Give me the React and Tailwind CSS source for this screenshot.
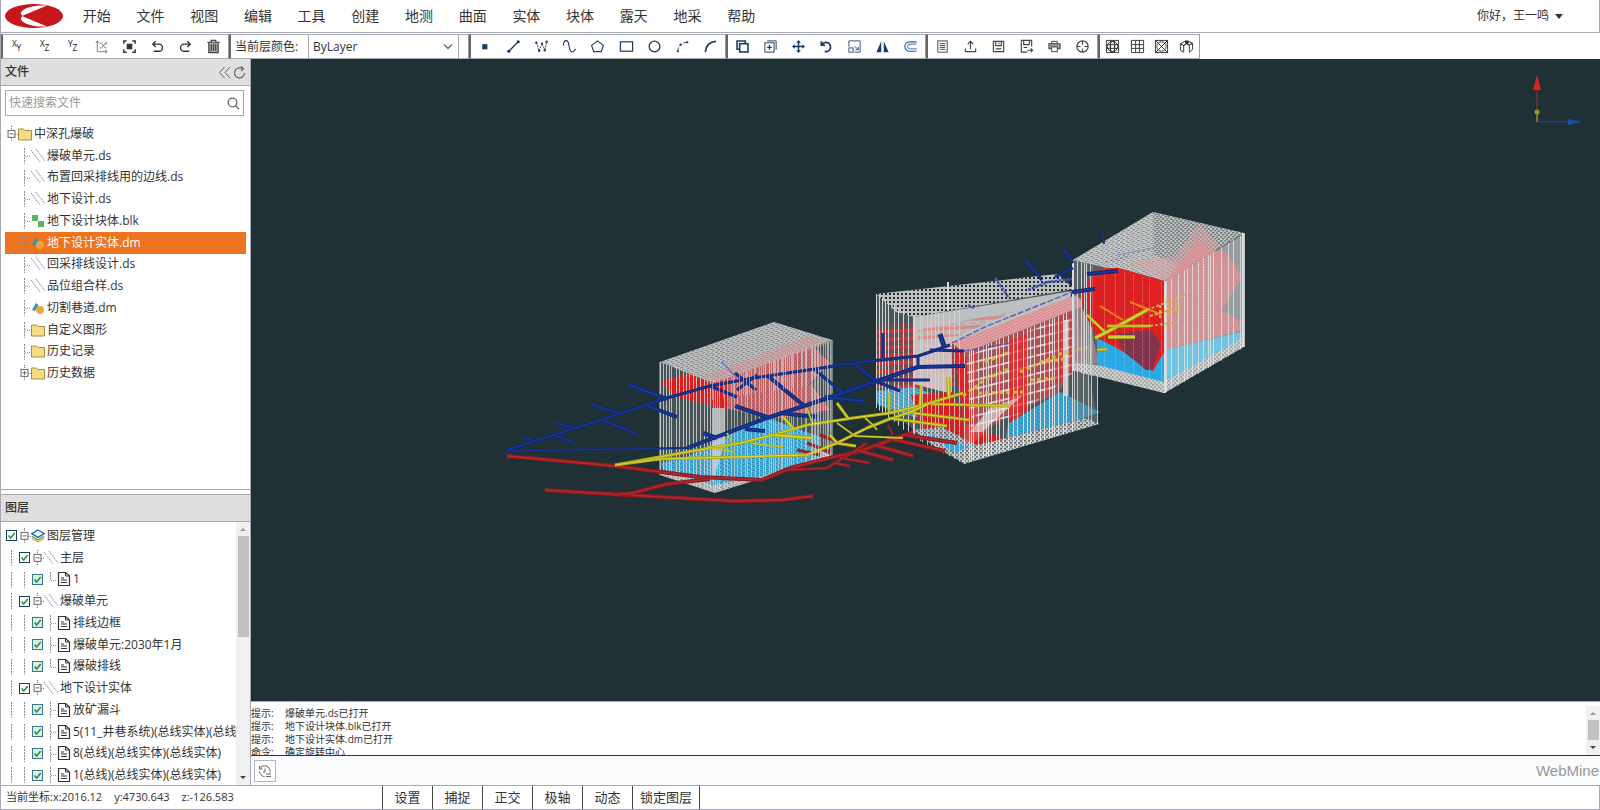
import React, { useState } from "react";

const FONT = "font-['Open_Sans','Noto_Sans_CJK_SC',sans-serif]";

const menus = ["开始", "文件", "视图", "编辑", "工具", "创建", "地测", "曲面", "实体", "块体", "露天", "地采", "帮助"];

const files = [
  { name: "爆破单元.ds", icon: "lines" },
  { name: "布置回采排线用的边线.ds", icon: "lines" },
  { name: "地下设计.ds", icon: "lines" },
  { name: "地下设计块体.blk", icon: "block" },
  { name: "地下设计实体.dm", icon: "solid" },
  { name: "回采排线设计.ds", icon: "lines" },
  { name: "品位组合样.ds", icon: "lines" },
  { name: "切割巷道.dm", icon: "solid" },
  { name: "自定义图形", icon: "folder" },
  { name: "历史记录", icon: "folder" },
  { name: "历史数据", icon: "folder", expander: "+" },
];

const layers = [
  { name: "图层管理", level: 0, icon: "layers" },
  { name: "主层", level: 1, icon: "lines" },
  { name: "1", level: 2, icon: "doc", last: true },
  { name: "爆破单元", level: 1, icon: "lines" },
  { name: "排线边框", level: 2, icon: "doc" },
  { name: "爆破单元:2030年1月", level: 2, icon: "doc" },
  { name: "爆破排线", level: 2, icon: "doc", last: true },
  { name: "地下设计实体", level: 1, icon: "lines" },
  { name: "放矿漏斗", level: 2, icon: "doc" },
  { name: "5(11_井巷系统)(总线实体)(总线实体)", level: 2, icon: "doc" },
  { name: "8(总线)(总线实体)(总线实体)", level: 2, icon: "doc" },
  { name: "1(总线)(总线实体)(总线实体)", level: 2, icon: "doc" },
];

const logs = [
  ["提示:", "爆破单元.ds已打开"],
  ["提示:", "地下设计块体.blk已打开"],
  ["提示:", "地下设计实体.dm已打开"],
  ["命令:", "确定旋转中心"],
];

const statusButtons = ["设置", "捕捉", "正交", "极轴", "动态"];

/* ---------- toolbar icons, all on a 16 grid ---------- */

const axis = (a, b) => (
  <g fill="#222" stroke="none" fontSize="9" fontWeight="500" fontFamily="Open Sans">
    <text x="2" y="8">{a}</text>
    <text x="7" y="13">{b}</text>
  </g>
);

const viewTools = [
  ["XY视图", axis("X", "Y")],
  ["XZ视图", axis("X", "Z")],
  ["YZ视图", axis("Y", "Z")],
  ["坐标", <g stroke="#777"><path d="M3.500 2v11.500H14M2 4l1.500-2L5 4M12 12l2 1.500-2 1.500" /><path d="M6 4.500h2l4 5h1.500M6 9.500h2l4-5h1.500M12 3l1.500 1.500L12 6" /></g>],
  ["全图", <g stroke="#333" strokeWidth="1.600"><path d="M2 5V2h3M11 2h3v3M14 11v3h-3M5 14H2v-3" /><rect x="5" y="5" width="6" height="6" fill="#333" stroke="none" /></g>],
  ["撤销", <path d="M6 2.500L3 5.500l3 3M3 5.500h6.500a3.800 3.800 0 010 7.600H4" stroke="#333" strokeWidth="1.500" />],
  ["重做", <path d="M10 2.500l3 3-3 3M13 5.500H6.500a3.800 3.800 0 000 7.600H12" stroke="#333" strokeWidth="1.500" />],
  ["删除", <g stroke="#444" strokeWidth="1.300"><path d="M1.500 3.500h13M5.500 3V1.500h5V3" /><path d="M3 4v10.500h10V4" fill="#aaa" /><path d="M5.700 5.500v7M8 5.500v7M10.300 5.500v7" /></g>],
];

const drawTools = [
  ["点", <rect x="4.500" y="5.500" width="5.500" height="5.500" fill="#1a3b63" stroke="none" />],
  ["直线", <g><path d="M3 13L13 3" strokeWidth="1.400" /><circle cx="3" cy="13" r="1.700" fill="#1a3b63" stroke="none" /><circle cx="13" cy="3" r="1.700" fill="#1a3b63" stroke="none" /></g>],
  ["多段线", <g><path d="M2.500 4l3 8.500L8.500 5l3 6.500L13.500 3" strokeDasharray="2 1" /><g fill="#1a3b63" stroke="none"><circle cx="2.500" cy="4" r="1.300" /><circle cx="5.500" cy="12.500" r="1.300" /><circle cx="8.500" cy="5" r="1.200" /><circle cx="11.500" cy="12" r="1.300" /><circle cx="13.500" cy="3" r="1.300" /></g></g>],
  ["曲线", <path d="M1.500 7c.5-7 5-7 6 0s3.500 9.500 7 3.500" strokeWidth="1.200" />],
  ["多边形", <path d="M8 2l6.300 4.800L12 13.500H4L1.700 6.800z" strokeWidth="1.200" />],
  ["矩形", <rect x="1.500" y="3" width="13" height="10" strokeWidth="1.300" />],
  ["圆", <circle cx="8" cy="8" r="5.700" strokeWidth="1.400" />],
  ["三点弧", <g strokeWidth=".9"><path d="M3 13C3.500 7 7 3.500 13.500 3.500" strokeDasharray="4 1.500" /><circle cx="3" cy="13" r=".8" fill="#1a3b63" /><circle cx="6" cy="6" r=".8" fill="#1a3b63" /><circle cx="13" cy="3.500" r=".8" fill="#1a3b63" /></g>],
  ["弧", <path d="M2.500 14C3 7.500 7 3 14 2.500" strokeWidth="1.800" />],
];

const editTools = [
  ["复制", <g strokeWidth="1.700"><path d="M4.500 11H2.200V2.200H11v2" /><rect x="5" y="5" width="8.800" height="8.800" /></g>],
  ["增量复制", <g><path d="M4.500 2H14v9.500" /><rect x="2" y="4" width="9.800" height="10" /><path d="M6.900 6.500v5M4.400 9h5" strokeWidth="1.300" /></g>],
  ["移动", <g><path d="M8 3v10M3 8h10" strokeWidth="1.600" /><path d="M8 1l2.500 3h-5zM8 15l2.500-3h-5zM1 8l3-2.500v5zM15 8l-3-2.500v5z" fill="#1a3b63" stroke="none" /></g>],
  ["旋转", <path d="M2.500 2.500v4h4M3 6.200A5 5 0 118.500 13.500H6" strokeWidth="1.900" />],
  ["缩放", <g strokeWidth=".9"><path d="M2 8V2h12v12H8" /><rect x="2" y="9.500" width="4.500" height="4.500" /><path d="M8 7.500l4 4M12 8.500v3H9" /></g>],
  ["镜像", <path d="M6.700 2v12H1.500zM9.300 2v12h5.200z" fill="#1a3b63" stroke="none" />],
  ["偏移", <g stroke="#2f5f9e" strokeWidth="1.200"><path d="M14.500 3H7a5 5 0 000 10h7.500" /><path d="M14.500 5.500H7.500a2.500 2.500 0 000 5h7" stroke="#6c8fbd" /></g>],
];

const fileTools = [
  ["文档", <g><rect x="3" y="2" width="10" height="12" /><path d="M5 5h6M5 7h6M5 9h6M5 11h6" /></g>],
  ["导出", <path d="M8 11V3M5 5.500L8 2.500l3 3M2.500 10v3.500h11V10" strokeWidth="1.200" />],
  ["保存", <g strokeWidth="1.200"><path d="M2.500 2.500h11v11h-11z" /><path d="M5 2.500V7h6V2.500M8.500 4v1.500M5 10.500h6" /></g>],
  ["另存为", <g strokeWidth="1.200"><path d="M9 14H2.500V1.500h11V8" /><path d="M5 1.500V6h6V1.500M5 9h4M9 12h5.500M12.500 10l2 2-2 2" /></g>],
  ["打印", <g><path d="M5 5V2.500h6V5" /><rect x="2" y="5" width="12" height="5.500" fill="#999" /><rect x="5" y="8.500" width="6" height="5" fill="#fff" /></g>],
  ["定位", <g strokeWidth="1.200"><circle cx="8" cy="8" r="6" /><path d="M8 2v4M8 10v4M2 8h4M10 8h4" /></g>],
];

const gridTools = [
  ["球面网格", <g><path d="M1.500 1.500h13v13h-13zM6 2v12M10 2v12M2 6h12M2 10h12" /><circle cx="8" cy="8" r="5.500" /><ellipse cx="8" cy="8" rx="2.500" ry="5.500" /></g>],
  ["网格", <path d="M1.500 1.500h13v13h-13zM6 2v12M10 2v12M2 6h12M2 10h12" />],
  ["边界", <g><rect x="1.500" y="1.500" width="13" height="13" /><path d="M2 2l12 12M14 2L2 14" /><circle cx="8" cy="8" r="5" /></g>],
  ["三维", <g><path d="M1.500 5v7L5 14V7zM5 7l3-2 3 1.500V14l3.500-3V4.500L11 6.500" /><path d="M1.500 5L7 2l7.500 2.500L11 6.500 8 5 5 7zM7 2v3M8 2.500h3" /><circle cx="8.500" cy="3.500" r="1.500" fill="#333" /></g>],
];

function ToolGroup({ tools, color, width }) {
  return (
    <div className={`flex h-[25px] items-center border-y border-l-2 border-r border-y-[#a9a9b4] border-l-[#666] border-r-[#999] ${width}`}>
      {tools.map(([label, icon]) => (
        <button key={label} type="button" aria-label={label} className="flex flex-1 items-center justify-center hover:bg-gray-100">
          <svg viewBox="0 0 16 16" className="h-[15px] w-[15px]" fill="none" stroke={color}>
            {icon}
          </svg>
        </button>
      ))}
    </div>
  );
}

/* ---------- tree parts ---------- */

function NodeIcon({ type }) {
  return (
    <svg viewBox="0 0 14 14" className="h-[14px] w-[14px] shrink-0" fill="none">
      {type === "lines" && (
        <path d="M0 1l9 12M5 0l9 12" stroke="#7f88b3" strokeDasharray="1.500 .7" />
      )}
      {type === "folder" && (
        <path d="M.5 2h5L7 3.500h6.500V13H.5z" fill="#f3dc83" stroke="#a98f3d" />
      )}
      {type === "block" && (
        <path d="M1 1h6v6H1zM7 7h6v6H7z" fill="#5cb85c" />
      )}
      {type === "solid" && (
        <>
          <path d="M1 9L5 2l2.500 2L4 10z" fill="#2d94c4" />
          <circle cx="9" cy="9" r="4" fill="#f0a63c" />
        </>
      )}
      {type === "layers" && (
        <>
          <path d="M1 9.500L7 13l6-3.500" stroke="#e8a33a" strokeWidth="1.400" />
          <path d="M1 7.300L7 11l6-3.700" stroke="#4fa661" strokeWidth="1.400" />
          <path d="M7 1l6.200 3.700L7 8.400.8 4.700z" fill="#fff" stroke="#2767b0" strokeWidth="1.400" />
        </>
      )}
      {type === "doc" && (
        <>
          <path d="M1.500 .5h7L12.500 4v9.500h-11z" fill="#fff" stroke="#333" strokeWidth="1.200" />
          <path d="M8.500 .5V4h4M4 6h3M4 8h6M4 10.500h6" stroke="#333" />
        </>
      )}
    </svg>
  );
}

function Expander({ sign = "-" }) {
  return (
    <svg viewBox="0 0 13 22" className="h-full w-[13px] shrink-0" fill="none" stroke="#666">
      <path d="M6.500 3v4M6.500 15v4M10 11.500h3" strokeDasharray="1 1" />
      <rect x="3" y="7.500" width="7" height="7" fill="#fff" />
      <path d="M4.500 11h4" />
      {sign === "+" && <path d="M6.500 9v4" />}
    </svg>
  );
}

function Branch({ last }) {
  return (
    <svg viewBox="0 0 13 22" className="h-full w-[13px] shrink-0" fill="none" stroke="#888">
      <path d={last ? "M6.500 3v8" : "M6.500 3v16"} strokeDasharray="2 1" />
      <path d="M7 11.500h6" strokeDasharray="1 1" />
    </svg>
  );
}

function Guide() {
  return (
    <svg viewBox="0 0 13 22" className="h-full w-[13px] shrink-0" stroke="#888">
      <path d="M6.500 3v16" strokeDasharray="2 1" />
    </svg>
  );
}

function LayerRow({ layer }) {
  const [visible, setVisible] = useState(true);
  return (
    <li className="flex items-center overflow-hidden whitespace-nowrap">
      {Array.from({ length: layer.level }, (_, i) => (
        <Guide key={i} />
      ))}
      <label className="flex h-full items-center">
        <span className="relative flex w-[13px] shrink-0 justify-center">
          <input
            type="checkbox"
            checked={visible}
            onChange={(e) => setVisible(e.target.checked)}
            aria-label={layer.name}
            className={`h-[11px] w-[11px] appearance-none border ${
              layer.level === 2 ? "border-[#3d7588] bg-[#dceee6]" : "border-[#16405f] bg-white"
            }`}
          />
          {visible && (
            <svg viewBox="0 0 11 11" className="pointer-events-none absolute inset-x-px top-0 h-[11px] w-[11px]" fill="none">
              <path d="M2.500 5.500L4.700 8l4-5" stroke="#2e9146" strokeWidth="1.700" />
            </svg>
          )}
        </span>
      </label>
      {layer.level === 2 ? <Branch last={layer.last} /> : <Expander />}
      <NodeIcon type={layer.icon} />
      <span className="pl-[2px]">{layer.name}</span>
    </li>
  );
}

function Scrollbar({ children }) {
  return (
    <div className="flex w-[14px] shrink-0 flex-col items-center bg-[#f0f0f0]">
      <svg viewBox="0 0 14 14" className="h-[14px] w-[14px]"><path d="M4 9h6L7 6z" fill="#999" /></svg>
      <div className="flex w-full flex-1 flex-col items-center">{children}</div>
      <svg viewBox="0 0 14 14" className="h-[14px] w-[14px]"><path d="M4 5h6L7 8z" fill="#444" /></svg>
    </div>
  );
}

/* ---------- 3D scene ---------- */

// small deterministic generator so the wireframes look the same on every render
function rng(seed) {
  let s = seed;
  return () => {
    s = (s * 16807) % 2147483647;
    return s / 2147483647;
  };
}

function Curtain({ x1, x2, top, bottom, step, color = "#d4d4d4", seed = 7, opacity = 1, dash }) {
  const next = rng(seed * 7919);
  let d = "";
  for (let x = x1; x <= x2; x += step * (0.5 + next())) {
    const t = (x - x1) / (x2 - x1);
    const y1 = top[0] + (top[1] - top[0]) * t;
    const y2 = bottom[0] + (bottom[1] - bottom[0]) * t;
    d += `M${Math.round(x) + 0.5} ${y1.toFixed(1)}V${y2.toFixed(1)}`;
  }
  return <path d={d} stroke={color} strokeWidth="1" opacity={opacity} strokeDasharray={dash} />;
}

const bluePipes = [
  ["507,450 607,418 667,398 710,386 753,378 815,369 853,363 918,356 933,351 950,345", 3],
  ["507,451 687,448", 2],
  ["687,448 767,418 807,405 860,387 918,367 965,366", 4],
  ["523,437 537,442", 3],
  ["555,423 575,428", 3],
  ["557,436 574,443", 3],
  ["591,404 620,414", 3],
  ["602,420 637,434", 3],
  ["629,385 667,399", 4],
  ["648,406 677,417", 4],
  ["710,386 737,397", 3],
  ["737,390 757,375", 3],
  ["735,373 756,390", 3],
  ["768,376 803,405", 4],
  ["815,370 842,392", 3],
  ["853,363 875,380", 3],
  ["735,406 767,417", 4],
  ["780,413 817,417", 4],
  ["825,397 863,401", 4],
  ["703,433 717,438", 4],
  ["745,429 765,431", 4],
  ["883,333 883,358", 3],
  ["940,334 944,346", 5],
  ["918,355 918,367", 3],
  ["860,387 875,380 930,380", 3],
  ["873,380 900,391", 3],
  ["930,350 964,351", 3],
  ["1063,248 1073,263", 3],
  ["1025,260 1042,280", 3],
  ["1055,277 1073,268", 3],
  ["1087,274 1118,271", 4],
  ["1072,292 1095,289", 4],
  ["1103,236 1104,244", 2],
];

const yellowPipes = [
  ["615,465 687,452 740,443 773,435 807,425 853,418 890,413 930,403 963,393", 3],
  ["615,465 660,459 807,455 837,443 867,428 887,420 913,411 930,403", 3],
  ["837,403 848,418", 3],
  ["783,417 793,428", 3],
  ["773,435 813,438", 4],
  ["750,443 783,447", 2],
  ["707,447 735,452", 2],
  ["727,433 732,443", 2],
  ["807,408 813,425", 2],
  ["837,423 855,436 903,438", 2],
  ["835,443 856,446", 3],
  ["830,435 837,443", 3],
  ["865,418 873,425 877,430", 2],
  ["889,393 889,413", 3],
  ["921,385 920,406", 3],
  ["948,377 949,397", 4],
  ["932,404 1010,406", 3],
  ["913,413 970,420", 3],
  ["888,418 947,426", 3],
  ["1095,338 1107,332 1147,310", 4],
  ["1087,315 1105,332", 3],
  ["1107,326 1150,326", 3],
  ["1108,337 1135,337", 4],
  ["1097,350 1107,349", 3],
];

const redPipes = [
  ["507,456 615,466 700,477 762,480 790,468 833,457 853,453 877,445 913,432", 4],
  ["545,490 610,494 733,501 783,500 813,496", 4],
  ["615,495 633,493 667,484 710,479", 4],
  ["762,480 787,470 827,468 853,452 867,443", 3],
  ["833,463 850,466", 3],
  ["840,458 870,463", 3],
  ["857,450 893,460", 4],
  ["875,445 913,456", 4],
  ["887,438 945,451", 4],
  ["905,435 957,443", 4],
  ["820,435 853,447", 3],
  ["807,443 830,452", 3],
  ["797,450 820,455", 3],
  ["888,425 893,435", 2],
];

function Pipes({ list, dark, light }) {
  return (
    <g fill="none" strokeLinejoin="round">
      {list.map(([points, w]) => (
        <g key={points}>
          <polyline points={points} stroke={dark} strokeWidth={w} />
          <polyline points={points} stroke={light} strokeWidth={w * 0.4} />
        </g>
      ))}
    </g>
  );
}

function Meshed({ d, fill, mesh, opacity = 1, meshOpacity = 1 }) {
  return (
    <g opacity={opacity}>
      <path d={d} fill={fill} />
      <path d={d} fill={mesh} opacity={meshOpacity} />
    </g>
  );
}

function Scene() {
  return (
    <svg viewBox="251 59 1349 642" className="block h-full w-full" fill="none">
      <defs>
        <pattern id="mesh" width="5" height="4" patternUnits="userSpaceOnUse" patternTransform="skewY(-12)">
          <path d="M0 .5h3M2 2.500h3" stroke="#1f3033" strokeWidth=".8" opacity=".5" />
        </pattern>
        <pattern id="mesh-dense" width="4" height="4" patternUnits="userSpaceOnUse">
          <path d="M0 1h2M2 3h2M1 0v1M3 2v1" stroke="#1f3033" strokeWidth="1" opacity=".75" />
        </pattern>
        <pattern id="mesh-light" width="4" height="3" patternUnits="userSpaceOnUse" patternTransform="skewY(14)">
          <path d="M0 .5h2M2 2h2" stroke="#dcdcdc" strokeWidth=".9" opacity=".8" />
        </pattern>
        <pattern id="grid-dark" width="4" height="4" patternUnits="userSpaceOnUse">
          <path d="M1 1h2v2H1z" fill="#1f3033" />
        </pattern>
        <pattern id="rows-red" width="10" height="8" patternUnits="userSpaceOnUse" patternTransform="skewY(-3)">
          <path d="M0 2h10" stroke="#e23232" strokeWidth="3.500" />
          <path d="M0 6h6" stroke="#e23232" strokeWidth="1.500" opacity=".7" />
        </pattern>
        <pattern id="rows-front" width="12" height="9" patternUnits="userSpaceOnUse" patternTransform="skewY(-14)">
          <path d="M0 2h12" stroke="#e8e8e8" strokeWidth="2" opacity=".8" />
          <path d="M3 0v9" stroke="#f03030" strokeWidth="3" opacity=".6" />
        </pattern>
      </defs>

      {/* left block */}
      <path d="M660 362l114-40 58 18v116l-117 37-55-18z" fill="#9aa0a0" opacity=".32" />
      <Meshed d="M660 475l55 18 117-37-20-9-100 28-35-12z" fill="#c4c4c4" mesh="url(#mesh)" />
      <Meshed d="M661 463l26-6 46-24 34-15 26 9 27 10v20l-60 20-47 8-50-15z" fill="#45b4e6" mesh="url(#mesh)" />
      <Meshed d="M687 374l126-27 17 16-20 20 20 27-50 8-47-8-20-4z" fill="#d96b6e" mesh="url(#mesh-dense)" opacity={0.9} meshOpacity={0.35} />
      <Meshed d="M660 382l28-8 26 8 14-2v30l-14-4-38-9z" fill="#e61f21" mesh="url(#mesh)" meshOpacity={0.6} />
      <Meshed d="M660 362l114-40 58 18-119 43z" fill="#c2c2c2" mesh="url(#mesh)" />
      <path d="M704 376l106-40 20 7-112 38z" fill="#dc8f92" opacity=".45" />
      <Curtain x1={660} x2={713} top={[362, 383]} bottom={[475, 492]} step={3} opacity={0.85} />
      <Curtain x1={713} x2={832} top={[383, 340]} bottom={[492, 456]} step={3} color="#dddddd" opacity={0.6} seed={19} />
      <path d="M712 408h13v34l-13 42z" fill="#d2d2d2" opacity=".75" />
      <path d="M832 340v116M660 362v113" stroke="#c8c8c8" />

      {/* middle block: back faces */}
      <path d="M876 294l181-20 15 23 27 127-135 40-88-61z" fill="#9aa0a0" opacity=".35" />
      <Meshed d="M876 294l182-20 16 15-160 28-18-5z" fill="#c0c0c0" mesh="url(#grid-dark)" />
      <path d="M877 326l78-6v66l-28 2-50 0z" fill="url(#rows-red)" opacity=".95" />
      <Meshed d="M876 391l38-4 40 16 0 20-18 0-34-10-24-8z" fill="#58b8dd" mesh="url(#mesh)" />
      <path d="M914 317l158-26-2 7-118 46 0 50-38-10z" fill="#dedede" opacity=".78" />
      <path d="M918 330l40-8 60-12-60 26-40 4z" fill="url(#rows-red)" opacity=".35" />
      <Meshed d="M911 395l42-3 12 32 40 15-26 8-40-10-20-12z" fill="#e61f21" mesh="url(#mesh)" meshOpacity={0.7} />
      <Meshed d="M912 430l30-3 34 18 32-6-44 24-26-14z" fill="#b4bcc0" mesh="url(#mesh-dense)" />
      <path d="M928 433l40 14 36-8-12 10-32 8z" fill="#30a8dd" />

      {/* middle block: front face */}
      <path d="M955 350l117-48v66l-14 26-54 22-30 26-8 0z" fill="#dc5558" opacity=".6" />
      <path d="M962 358l110-44v60l-60 46-40 14z" fill="url(#rows-front)" />
      <path d="M1010 340l17-6v78l-9 34-9 0z" fill="#ee2427" opacity=".7" />
      <path d="M1052 322l12-5v62l-12 6z" fill="#ee2427" opacity=".6" />
      <Meshed d="M1008 424l52-32 40 20-28 10-66 16z" fill="#3da9d8" mesh="url(#mesh)" meshOpacity={0.7} />
      <path d="M990 408l32-12-40 36-12 0z" fill="#e8e8e8" opacity=".6" />
      <path d="M952 344l14 12 6 68-8 0z" fill="#e61f21" opacity=".9" />
      <Meshed d="M952 343l124-48 10 10-122 48z" fill="#dd8387" mesh="url(#mesh-light)" meshOpacity={0.9} />
      <Meshed d="M964 464l135-40-12-6-120 30-16 6z" fill="#c8c8c8" mesh="url(#mesh-dense)" />
      <path d="M1074 297l13 18 12 48-25 6z" fill="#df9093" opacity=".6" />
      <path d="M1076 368l22-2v56l-22-5z" fill="#6b7576" opacity=".4" />
      <Curtain x1={876} x2={914} top={[294, 317]} bottom={[408, 438]} step={4} seed={5} />
      <Curtain x1={914} x2={962} top={[317, 309]} bottom={[438, 463]} step={4} seed={31} opacity={0.85} />
      <Curtain x1={964} x2={1074} top={[353, 310]} bottom={[463, 431]} step={4} color="#ececec" opacity={0.85} seed={11} />
      <Curtain x1={1074} x2={1098} top={[298, 330]} bottom={[430, 424]} step={4} color="#c4c4c4" seed={3} />
      <path d="M1066 320v76" stroke="#dedede" strokeWidth="5" opacity=".85" />
      <path d="M948 282v28" stroke="#dedede" strokeWidth="2" />
      <path d="M963 396l20-15 25-12M985 362l25-10M1020 372l40-18 30-7M978 393l50-1M1030 380l26-2M1040 362l28-3" stroke="#d9bb3f" strokeWidth="3" strokeDasharray="4 3" opacity=".9" />
      <path d="M952 343l35-17 85-34M964 351l48-8" stroke="#5257b5" strokeWidth="1.500" strokeDasharray="6 2" opacity=".9" />
      <path d="M995 278l14 20M1028 290l20-8 24-3M968 305l6 3" stroke="#4c52b8" strokeWidth="2.500" strokeDasharray="3 1" />

      {/* right block */}
      <path d="M1073 260l80-48 91 21v113l-79 47-90-23z" fill="#9a9f9f" opacity=".45" />
      <path d="M1164 282l80-48v113l-80 46z" fill="#a8acac" opacity=".8" />
      <Meshed d="M1073 260l80-48 91 21-80 48z" fill="#cacaca" mesh="url(#mesh)" />
      <path d="M1153 212l91 21-58 35-32-13z" fill="url(#mesh-dense)" opacity=".6" />
      <path d="M1128 262l47-6 24-32 22 22-56 35z" fill="#d9a0a3" opacity=".55" />
      <path d="M1097 340l13 0 42 31 12-21v43l-67-23z" fill="#2ba9e6" />
      <Meshed d="M1094 272l11-4 14 0 46 13v70l-12 20-14-10-24-14-18-9-14-28-3-20z" fill="#ea1f20" mesh="url(#mesh)" meshOpacity={0.5} />
      <Meshed d="M1115 334l36-4 10 14-9 26h-6l-22-18z" fill="#8f3350" mesh="url(#mesh)" />
      <Meshed d="M1165 282l33-42 12 10 16 2 16 24-20 34 20 12v8l-77 20z" fill="#dc8589" mesh="url(#mesh-light)" opacity={0.85} meshOpacity={0.6} />
      <path d="M1165 350l77-18v14l-77 37z" fill="#72c4e4" />
      <Meshed d="M1075 363l22 2 67 17 79-44v9l-79 46-89-22z" fill="#cfcfcf" mesh="url(#mesh-dense)" meshOpacity={0.45} />
      <Curtain x1={1073} x2={1092} top={[260, 265]} bottom={[371, 376]} step={4} seed={41} />
      <Curtain x1={1092} x2={1164} top={[265, 281]} bottom={[376, 393]} step={9} seed={29} opacity={0.25} />
      <Curtain x1={1166} x2={1244} top={[281, 233]} bottom={[392, 347]} step={5} seed={23} color="#e2e2e2" opacity={0.8} />
      <path d="M1165 281v112M1073 260v111M1243 233v114" stroke="#ddd" strokeWidth="2" />
      <path d="M1100 306l23 14M1130 302l30 12" stroke="#e0861f" strokeWidth="2" />
      <path d="M1147 310l38-15M1150 326l28-4M1150 316l33-10M1160 318v-14M1168 315v-14M1176 311v-14" stroke="#dcb14d" strokeWidth="2" strokeDasharray="3 2" />
      <path d="M1118 255l36-7M1105 262l25-6" stroke="#6a70c0" strokeDasharray="3 2" />

      {/* tunnels */}
      <Pipes list={redPipes} dark="#8f1b20" light="#b4282c" />
      <Pipes list={bluePipes} dark="#10287c" light="#1a3a9c" />
      <Pipes list={yellowPipes} dark="#a9a61c" light="#dcdb2c" />
      <Curtain x1={712} x2={812} top={[383, 345]} bottom={[400, 385]} step={5} color="#cfcfe0" opacity={0.6} seed={13} />
      <Curtain x1={812} x2={832} top={[345, 340]} bottom={[460, 456]} step={6} color="#d8d8d8" opacity={0.7} seed={17} />
      <path d="M722 362l13 14" stroke="#6a70c0" strokeWidth="2" strokeDasharray="2 1" />
    </svg>
  );
}

function AxisGizmo() {
  return (
    <svg viewBox="0 0 60 60" className="absolute right-[10px] top-[10px] h-[60px] w-[60px]" fill="none">
      <path d="M7 52V20" stroke="#b3262b" />
      <path d="M7 6l4 15H3z" fill="#e0221f" />
      <path d="M8 53h34" stroke="#1a4da3" />
      <path d="M52 53l-14-3v6z" fill="#1a4da3" />
      <path d="M7 44v9" stroke="#d39a2a" />
      <circle cx="7" cy="43" r="2.500" fill="#7ea22f" />
    </svg>
  );
}

/* ---------- page ---------- */

export default function App() {
  const [selected, setSelected] = useState("地下设计实体.dm");

  return (
    <div className={`flex h-screen flex-col overflow-hidden bg-white text-xs text-[#333] ${FONT}`}>
      <header className="flex h-[33px] shrink-0 items-center justify-between border-x border-b border-[#a9a9b4] pl-1 pr-9">
        <div className="flex items-center">
          <svg viewBox="0 0 58 24" className="h-6 w-[58px]">
            <ellipse cx="29" cy="12" rx="29" ry="12" fill="#c8161d" />
            <path d="M42 1.500C30 1 19 3 15.500 9l2 3-2 3C19 21 30 23 42 22.500L18 12.500v-1z" fill="#fff" />
          </svg>
          <nav className="ml-[7px] grid w-[698px] grid-cols-13">
            {menus.map((m) => (
              <button key={m} type="button" className="text-center text-sm leading-8 hover:text-[#ec7421]">
                {m}
              </button>
            ))}
          </nav>
        </div>
        <button type="button" className="flex items-center gap-[6px]">
          你好，王一鸣
          <svg viewBox="0 0 8 5" className="h-[5px] w-2"><path d="M0 0h8L4 5z" fill="#333" /></svg>
        </button>
      </header>

      <div className="flex h-[26px] shrink-0 items-start border-l border-[#a9a9b4] pt-px">
        <ToolGroup tools={viewTools} color="#333" width="w-[228px]" />
        <div className="flex h-[25px] w-[240px] items-center border-y border-l-2 border-r border-y-[#a9a9b4] border-l-[#666] border-r-[#999]">
          <label htmlFor="layer-color" className="w-[77px] pl-1">当前层颜色:</label>
          <div className="relative">
            <select id="layer-color" className="h-[23px] w-[151px] appearance-none border-x border-[#a9a9b4] bg-white pl-1 outline-none">
              <option>ByLayer</option>
            </select>
            <svg viewBox="0 0 10 6" className="pointer-events-none absolute right-[6px] top-[9px] h-[6px] w-[10px]" fill="none">
              <path d="M1 .5l4 4 4-4" stroke="#666" strokeWidth="1.300" />
            </svg>
          </div>
        </div>
        <ToolGroup tools={drawTools} color="#1a3b63" width="w-[257px]" />
        <ToolGroup tools={editTools} color="#1a3b63" width="w-[200px]" />
        <ToolGroup tools={fileTools} color="#444" width="w-[172px]" />
        <ToolGroup tools={gridTools} color="#333" width="w-[102px]" />
      </div>

      <div className="flex min-h-0 flex-1">
        <aside className="flex w-[251px] shrink-0 flex-col border-x border-[#a9a9b4]">
          <section className="flex min-h-0 flex-1 flex-col border-b border-[#a9a9b4]">
            <div className="flex h-[27px] shrink-0 items-center justify-between border-b border-[#a9a9b4] bg-[#dfdfdf] pl-1 pr-1">
              <h2 className="font-medium">文件</h2>
              <div className="flex items-center gap-[2px]">
                <button type="button" aria-label="收起">
                  <svg viewBox="0 0 13 13" className="h-[13px] w-[13px]" fill="none" stroke="#666"><path d="M6.500 1L1.500 6.500l5 5.500M12 1L7 6.500l5 5.500" /></svg>
                </button>
                <button type="button" aria-label="刷新">
                  <svg viewBox="0 0 13 13" className="h-[13px] w-[13px]" fill="none" stroke="#666" strokeWidth="1.200"><path d="M11.500 7A5 5 0 119 2.600M8 .5l2.500 2.200L8 5" /></svg>
                </button>
              </div>
            </div>
            <div className="mx-1 mt-1 flex h-[26px] w-[239px] shrink-0 items-center border border-[#a9a9b4] px-[3px]">
              <input
                type="text"
                aria-label="快速搜索文件"
                placeholder="快速搜索文件"
                className="min-w-0 flex-1 outline-none placeholder:text-[#999]"
              />
              <svg viewBox="0 0 13 13" className="h-[13px] w-[13px]" fill="none" stroke="#666" strokeWidth="1.300"><circle cx="5.500" cy="5.500" r="4.300" /><path d="M8.600 8.600l3.400 3.600" /></svg>
            </div>
            <ul className="mx-1 mt-[7px] grid h-[261px] w-[241px] shrink-0 auto-rows-fr">
              <li className="flex items-center">
                <Expander />
                <NodeIcon type="folder" />
                <span className="pl-[2px]">中深孔爆破</span>
              </li>
              {files.map((f) => (
                <li key={f.name} className={selected === f.name ? "bg-[#ec7421] text-white" : ""}>
                  <button type="button" onClick={() => setSelected(f.name)} className="flex h-full w-full items-center pl-[13px] text-left">
                    {f.expander ? <Expander sign={f.expander} /> : <Branch />}
                    <NodeIcon type={f.icon} />
                    <span className="pl-[2px]">{f.name}</span>
                  </button>
                </li>
              ))}
            </ul>
          </section>

          <section className="mt-1 flex h-[291px] shrink-0 flex-col border-t border-[#a9a9b4]">
            <h2 className="flex h-[27px] shrink-0 items-center border-b border-[#a9a9b4] bg-[#dfdfdf] pl-1 font-medium">图层</h2>
            <div className="flex min-h-0 flex-1">
              <ul className="ml-1 mt-[3px] grid h-[261px] min-w-0 flex-1 auto-rows-fr">
                {layers.map((l) => (
                  <LayerRow key={l.name + l.level} layer={l} />
                ))}
              </ul>
              <Scrollbar>
                <div className="h-[101px] w-[11px] bg-[#c1c1c1]" />
              </Scrollbar>
            </div>
          </section>
        </aside>

        <main className="flex min-w-0 flex-1 flex-col">
          <div className="relative min-h-0 flex-1 bg-[#1f3135]">
            <Scene />
            <AxisGizmo />
          </div>
          <div className="flex h-[54px] shrink-0 border-t border-[#a9a9b4]">
            <div className="min-w-0 flex-1 overflow-hidden pt-[5px] text-[10px] leading-[13px]">
              {logs.map(([kind, text]) => (
                <p key={text} className="flex">
                  <span className="w-[34px]">{kind}</span>
                  {text}
                </p>
              ))}
            </div>
            <div className="flex pt-1">
              <Scrollbar>
                <div className="h-5 w-[11px] bg-[#c1c1c1]" />
              </Scrollbar>
            </div>
          </div>
          <div className="flex h-[30px] shrink-0 items-center border-t border-[#333] bg-[#f9fbfc] pl-[3px]">
            <button type="button" aria-label="历史命令" className="flex h-[22px] w-[22px] items-center justify-center border border-[#b4b4bc] bg-white">
              <svg viewBox="0 0 14 14" className="h-[14px] w-[14px]" fill="none" stroke="#666"><path d="M1.500 2v3h3M2 4.500C4 1 9 1 11 4s1 4.500 1 4.500M1.500 7.500C2 10.500 4 12.500 6.500 12.500M7 4.500v3.500H5M8 10h5M8 12.500h5" /></svg>
            </button>
            <input type="text" aria-label="命令" className="min-w-0 flex-1 bg-transparent px-2 outline-none" />
            <span className="pr-px font-['Liberation_Sans',sans-serif] text-[15px] text-[#999]">WebMine</span>
          </div>
        </main>
      </div>

      <footer className="flex h-[25px] shrink-0 items-stretch border border-[#a9a9b4]">
        <div className="flex w-[382px] items-center gap-3 border-r border-[#444] pl-[5px] text-[11px]">
          <span>当前坐标:x:2016.12</span>
          <span>y:4730.643</span>
          <span>z:-126.583</span>
        </div>
        {statusButtons.map((b) => (
          <button key={b} type="button" className="w-[50px] border-r border-[#444] text-[13px] hover:bg-gray-100">{b}</button>
        ))}
        <button type="button" className="w-[67px] border-r border-[#444] text-[13px] hover:bg-gray-100">锁定图层</button>
      </footer>
    </div>
  );
}
